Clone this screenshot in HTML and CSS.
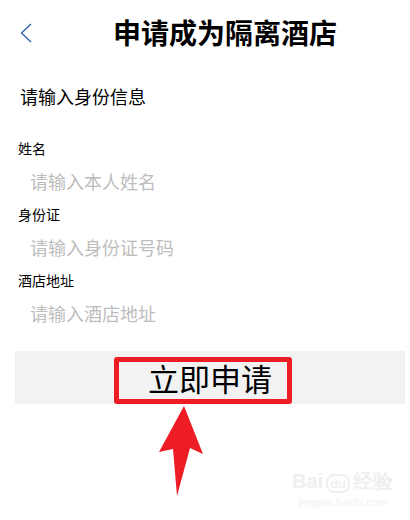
FILE: index.html
```html
<!DOCTYPE html>
<html>
	<head>
		<meta charset="UTF-8">
		<title>申请成为隔离酒店</title>
		<link rel="stylesheet" href="styles.css">
	</head>
	<body>
		<div class="header">
			<a class="back" href="#">
				<svg width="12" height="20" viewBox="0 0 12 20">
					<polyline points="11,1 1.5,10 11,19" fill="none" stroke="#2a5db0" stroke-width="1.3"/>
				</svg>
			</a>
			<h1 class="title">申请成为隔离酒店</h1>
		</div>
		<p class="tip">请输入身份信息</p>
		<div class="form">
			<div class="field">
				<label>姓名</label>
				<input type="text" placeholder="请输入本人姓名">
			</div>
			<div class="field">
				<label>身份证</label>
				<input type="text" placeholder="请输入身份证号码">
			</div>
			<div class="field">
				<label>酒店地址</label>
				<input type="text" placeholder="请输入酒店地址">
			</div>
		</div>
		<div class="submit">
			<span class="btn">立即申请</span>
		</div>
		<svg class="arrow" width="50" height="92" viewBox="0 0 50 92">
			<polygon points="26,1 45,49 32,43 19,91 15,44 1,47" fill="#ee1c25"/>
		</svg>
		<div class="mark">
			<div class="mark-logo">Bai<span class="paw">du</span>经验</div>
			<div class="mark-url">jingyan.baidu.com</div>
		</div>
	</body>
</html>
```

FILE: styles.css
```css
*{
	margin: 0;
	padding: 0;
}
body{
	width: 410px;
	height: 520px;
	position: relative;
	overflow: hidden;
	background: #fff;
	font-family: "Noto Sans CJK SC", "Noto Sans", sans-serif;
	color: #000;
}
.header{
	display: flex;
	align-items: center;
	height: 66px;
}
.back{
	width: 40px;
	display: flex;
	justify-content: flex-end;
	padding-right: 8px;
	box-sizing: border-box;
}
.back svg{
	display: block;
}
.title{
	flex: 1;
	text-align: center;
	font-size: 28px;
	font-weight: bold;
	line-height: 40px;
	margin-top: -2px;
}
.tip{
	font-size: 18px;
	line-height: 30px;
	padding: 15px 0 0 20px;
	height: 57px;
}
.form{
	padding-left: 18px;
}
.field label{
	display: block;
	font-size: 14px;
	line-height: 20px;
}
.field input{
	display: block;
	border: none;
	outline: none;
	width: 360px;
	height: 46px;
	padding-left: 12px;
	font-family: inherit;
	font-size: 18px;
	background: transparent;
}
.field input::placeholder{
	color: #bdbdbd;
}
.submit{
	margin: 15px 5px 0 15px;
	height: 53px;
	background: #f2f2f2;
	display: flex;
	align-items: flex-end;
	padding-left: 99px;
}
.btn{
	width: 178px;
	height: 47px;
	box-sizing: border-box;
	border: 5px solid #ee1c25;
	border-radius: 3px;
	font-size: 31px;
	line-height: 32px;
	padding-left: 29px;
}
.arrow{
	display: block;
	margin: 1px 0 0 158px;
}
.mark{
	position: absolute;
	left: 292px;
	top: 470px;
	color: #efefef;
	font-family: "Liberation Sans", sans-serif;
	text-align: center;
}
.mark-logo{
	font-size: 20px;
	font-weight: bold;
	line-height: 22px;
}
.paw{
	font-size: 13px;
	border: 2px solid #efefef;
	border-radius: 8px;
	padding: 0 2px;
	margin: 0 3px;
}
.mark-url{
	font-size: 11px;
	line-height: 14px;
	color: #f2f2f2;
}
```
